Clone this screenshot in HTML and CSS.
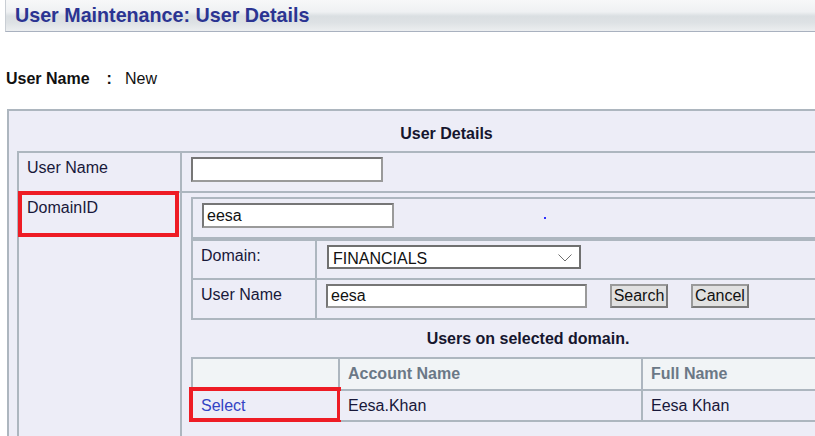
FILE: index.html
```html
<!DOCTYPE html>
<html lang="en">
<head>
<meta charset="utf-8">
<title>User Maintenance: User Details</title>
<link rel="stylesheet" href="styles.css">
</head>
<body>
<div class="titlebar"><h1 class="title">User Maintenance: User Details</h1></div>

<div class="userline">
  <span class="ul-label">User Name</span>
  <span class="ul-colon">:</span>
  <span class="ul-value">New</span>
</div>

<div class="panel">
  <div class="panel-head">User Details</div>
  <div class="t1">
    <div class="cell label">User Name</div>
    <div class="cell value r1"><input class="txt w192" type="text"></div>

    <div class="cell label annotated">DomainID<span class="redbox rb-domain"></span></div>
    <div class="cell value r2">
      <div class="t2">
        <div class="cell t2row">
          <input class="txt w192" type="text" value="eesa">
          <span class="dot"></span>
        </div>
      </div>
      <div class="t3">
        <div class="cell label">Domain:</div>
        <div class="cell value r3a">
          <div class="select">
            <span class="select-text">FINANCIALS</span>
            <svg class="chev" width="14" height="8" viewBox="0 0 14 8"><polyline points="0.5,0.5 7,7 13.5,0.5" fill="none" stroke="#6e6e6e" stroke-width="1"/></svg>
          </div>
        </div>
        <div class="cell label">User Name</div>
        <div class="cell value r3b">
          <input class="txt w261" type="text" value="eesa">
          <button class="btn" type="button">Search</button>
          <button class="btn" type="button">Cancel</button>
        </div>
      </div>
      <div class="sub-head">Users on selected domain.</div>
      <div class="t4">
        <div class="cell th"></div>
        <div class="cell th">Account Name</div>
        <div class="cell th">Full Name</div>
        <div class="cell td annotated"><a class="link" href="#">Select</a><span class="redbox rb-select"></span></div>
        <div class="cell td">Eesa.Khan</div>
        <div class="cell td">Eesa Khan</div>
      </div>
    </div>
  </div>
</div>
</body>
</html>
```

FILE: styles.css
```css
html, body {
  margin: 0;
  padding: 0;
  overflow: hidden;
  background: #ffffff;
}
body {
  font-family: "Liberation Sans", Arial, sans-serif;
  font-size: 16px;
  color: #18183a;
  width: 815px;
  height: 436px;
}

/* title bar */
.titlebar {
  margin-left: 5px;
  height: 31px;
  border-left: 1px solid #c9ced4;
  border-bottom: 1px solid #a9b1bf;
  background: linear-gradient(to bottom, #f7f8f9 0%, #eff1f3 38%, #dadfe2 52%, #dde1e4 72%, #eceef0 100%);
  padding-left: 9px;
  width: 1000px;
}
.title {
  margin: 0;
  font-size: 19.7px;
  line-height: 31px;
  font-weight: bold;
  color: #2b3492;
  white-space: nowrap;
}

/* user line */
.userline {
  display: flex;
  align-items: baseline;
  margin: 38px 0 0 6px;
  height: 18px;
}
.ul-label { font-weight: bold; color: #111; }
.ul-colon { font-weight: bold; color: #111; margin-left: 17px; }
.ul-value { margin-left: 13px; color: #111; }

/* outer panel */
.panel {
  margin: 21px 0 0 7px;
  width: 859px;
  padding: 0 8px 0 8px;
  border: 2px solid #adb6bf;
  border-bottom: none;
  background: #ededf7;
}
.panel-head {
  height: 40px;
  line-height: 40px;
  padding-top: 3px;
  box-sizing: border-box;
  text-align: center;
  font-weight: bold;
  color: #16162e;
}

/* generic grid tables: background shows through gaps as borders */
.t1, .t2, .t3, .t4 {
  display: grid;
  gap: 2px;
  padding: 2px;
  background: #adb6bf;
}
.cell {
  background: #ededf7;
  position: relative;
}
.t1 { grid-template-columns: 161px 1fr; }
.t2 { grid-template-columns: 1fr; }
.t3 { grid-template-columns: 122px 1fr; }
.t4 { grid-template-columns: 145px 301px 1fr; }

.label {
  padding: 6px 8px 0 8px;
}
.value { padding: 4px 9px 9px 9px; }
.r1 { display: flex; }
.r2 { padding-bottom: 30px; }

.t2row {
  display: flex;
  align-items: flex-start;
  padding: 4px 9px 9px 9px;
}
.dot {
  width: 2px;
  height: 2px;
  background: #2f2fff;
  margin: 14px 0 0 150px;
}

.r3a { display: flex; padding: 4px 9px 9px 10px; }
.r3b { display: flex; align-items: flex-start; padding: 4px 9px 10px 9px; }

/* inputs */
.txt {
  display: block;
  box-sizing: border-box;
  height: 25px;
  margin: 0;
  padding: 0 3px;
  border: 2px solid #7a7a7a;
  border-color: #767676 #9a9a9a #9a9a9a #767676;
  background: #fff;
  font-family: "Liberation Sans", Arial, sans-serif;
  font-size: 16px;
  color: #111;
  outline: none;
}
.w192 { width: 192px; }
.w261 { width: 261px; height: 24px; padding-left: 3px; }

.select {
  box-sizing: border-box;
  width: 254px;
  height: 24px;
  border: 2px solid #707070;
  background: #fff;
  display: flex;
  align-items: flex-start;
  justify-content: space-between;
  padding: 3px 7px 0 4px;
  color: #111;
}
.select-text { line-height: 18px; }
.chev { display: block; margin-top: 4px; }

.btn {
  box-sizing: border-box;
  height: 24px;
  width: 58px;
  margin: 0 0 0 23px;
  padding: 0;
  border: 2px solid #8a8a8a;
  border-color: #9a9a9a #7a7a7a #7a7a7a #9a9a9a;
  background: #e1e1e1;
  font-family: "Liberation Sans", Arial, sans-serif;
  font-size: 16px;
  color: #111;
}

.sub-head {
  height: 37px;
  line-height: 37px;
  text-align: center;
  font-weight: bold;
  color: #16162e;
}

.th {
  background: #f1f4f6;
  color: #6b7886;
  font-weight: bold;
  padding: 5px 8px 6px 8px;
  line-height: 19px;
}
.td {
  padding: 5px 8px 5px 8px;
  line-height: 19px;
  color: #18183a;
}
.link {
  color: #3344c4;
  text-decoration: none;
}

/* red annotation frames */
.redbox {
  position: absolute;
  border: 4px solid #ee1c25;
  box-sizing: border-box;
  pointer-events: none;
}
.rb-domain { left: -1px; top: -2px; width: 161px; height: 46px; }
.rb-select { left: -4px; top: -4px; width: 152px; height: 35px; }
```
